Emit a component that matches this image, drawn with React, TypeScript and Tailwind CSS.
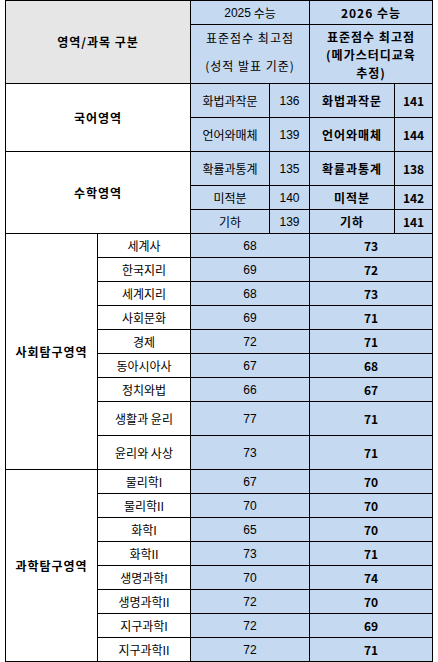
import React from "react";

// 수능 표준점수 최고점 비교표 (2025 실채점 vs 2026 추정)

const BLUE = "bg-[#c5d9f1]";
const KR = "font-[family-name:'Noto_Sans_CJK_KR',sans-serif]";
const NUM = "font-[family-name:'Liberation_Sans_Narrow','Liberation_Sans',sans-serif]";

type CellProps = {
  children?: React.ReactNode;
  className?: string;
};

function Cell({ children, className = "" }: CellProps) {
  return (
    <div className={`flex items-center justify-center text-center text-[12px] leading-none text-black ${className}`}>
      {children}
    </div>
  );
}

const korean = [
  { name: "화법과작문", prev: 136, next: 141 },
  { name: "언어와매체", prev: 139, next: 144 },
];

const math = [
  { name: "확률과통계", prev: 135, next: 138 },
  { name: "미적분", prev: 140, next: 142 },
  { name: "기하", prev: 139, next: 141 },
];

const social = [
  { name: "세계사", prev: 68, next: 73 },
  { name: "한국지리", prev: 69, next: 72 },
  { name: "세계지리", prev: 68, next: 73 },
  { name: "사회문화", prev: 69, next: 71 },
  { name: "경제", prev: 72, next: 71 },
  { name: "동아시아사", prev: 67, next: 68 },
  { name: "정치와법", prev: 66, next: 67 },
  { name: "생활과 윤리", prev: 77, next: 71 },
  { name: "윤리와 사상", prev: 73, next: 71 },
];

const science = [
  { name: "물리학I", prev: 67, next: 70 },
  { name: "물리학II", prev: 70, next: 70 },
  { name: "화학I", prev: 65, next: 70 },
  { name: "화학II", prev: 73, next: 71 },
  { name: "생명과학I", prev: 70, next: 74 },
  { name: "생명과학II", prev: 72, next: 70 },
  { name: "지구과학I", prev: 72, next: 69 },
  { name: "지구과학II", prev: 72, next: 71 },
];

export default function App() {
  return (
    <div className={`min-h-[662px] w-[438px] bg-white pl-[5px] ${KR}`}>
      <div className="grid w-[428px] grid-cols-[91px_92px_78px_39px_84px_37px] grid-rows-[23px_58px_33px_33px_33px_23px_23px_repeat(7,23px)_33px_33px_repeat(8,23px)] gap-px bg-black p-px">
        {/* header */}
        <Cell className="col-span-2 row-span-2 bg-[#e7e6e6] font-bold tracking-[1px]">영역/과목 구분</Cell>
        <Cell className={`col-span-2 ${BLUE}`}>
          <span className={NUM}>2025</span>&nbsp;수능
        </Cell>
        <Cell className={`col-span-2 ${BLUE} font-bold tracking-[1px]`}>2026 수능</Cell>
        <Cell className={`col-span-2 ${BLUE} flex-col gap-[16px] pb-[5px] tracking-[1px]`}>
          <span>표준점수 최고점</span>
          <span>(성적 발표 기준)</span>
        </Cell>
        <Cell className={`col-span-2 ${BLUE} flex-col gap-[6px] pt-[1px] font-bold tracking-[1px]`}>
          <span>표준점수 최고점</span>
          <span>(메가스터디교육</span>
          <span>추정)</span>
        </Cell>

        {/* 국어 */}
        <Cell className="col-span-2 row-span-2 bg-white font-bold tracking-[1px]">국어영역</Cell>
        {korean.map((r) => (
          <React.Fragment key={r.name}>
            <Cell className={BLUE}>{r.name}</Cell>
            <Cell className={`${BLUE} ${NUM}`}>{r.prev}</Cell>
            <Cell className={`${BLUE} font-bold tracking-[1px]`}>{r.name}</Cell>
            <Cell className={`${BLUE} font-bold`}>{r.next}</Cell>
          </React.Fragment>
        ))}

        {/* 수학 */}
        <Cell className="col-span-2 row-span-3 bg-white font-bold tracking-[1px]">수학영역</Cell>
        {math.map((r) => (
          <React.Fragment key={r.name}>
            <Cell className={BLUE}>{r.name}</Cell>
            <Cell className={`${BLUE} ${NUM}`}>{r.prev}</Cell>
            <Cell className={`${BLUE} font-bold tracking-[1px]`}>{r.name}</Cell>
            <Cell className={`${BLUE} font-bold`}>{r.next}</Cell>
          </React.Fragment>
        ))}

        {/* 사회탐구 */}
        <Cell className="row-span-9 bg-white font-bold tracking-[1px]">사회탐구영역</Cell>
        {social.map((r) => (
          <React.Fragment key={r.name}>
            <Cell className="bg-white">{r.name}</Cell>
            <Cell className={`col-span-2 ${BLUE} ${NUM}`}>{r.prev}</Cell>
            <Cell className={`col-span-2 ${BLUE} font-bold`}>{r.next}</Cell>
          </React.Fragment>
        ))}

        {/* 과학탐구 */}
        <Cell className="row-span-8 bg-white font-bold tracking-[1px]">과학탐구영역</Cell>
        {science.map((r) => (
          <React.Fragment key={r.name}>
            <Cell className="bg-white">{r.name}</Cell>
            <Cell className={`col-span-2 ${BLUE} ${NUM}`}>{r.prev}</Cell>
            <Cell className={`col-span-2 ${BLUE} font-bold`}>{r.next}</Cell>
          </React.Fragment>
        ))}
      </div>
    </div>
  );
}
